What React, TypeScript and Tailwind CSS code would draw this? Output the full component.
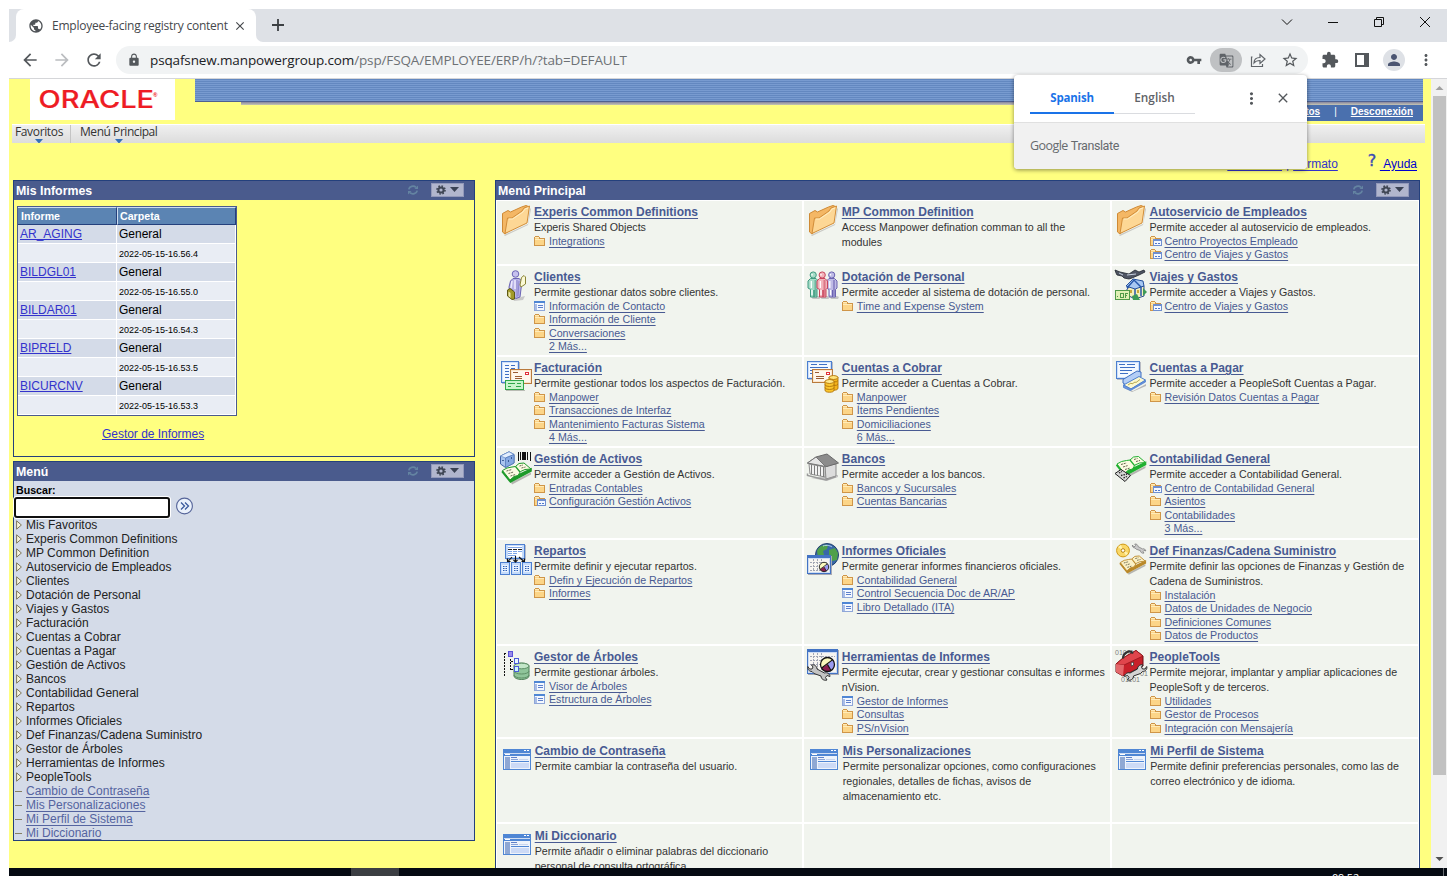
import React from "react";
import {
  MdArrowBack,
  MdArrowForward,
  MdClose,
  MdExtension,
  MdGTranslate,
  MdLock,
  MdMoreVert,
  MdPerson,
  MdPublic,
  MdRefresh,
  MdStarBorder,
  MdVpnKey,
} from "react-icons/md";

type IconKind = "folder" | "page" | "center";
type LinkItem = [IconKind | null, string];
type Entry = {
  icon: React.ReactNode;
  title: string;
  desc: string[];
  links: LinkItem[];
  low?: boolean;
};

/* ---------- large 32x32 icons ---------- */

const Svg32 = ({ children }: { children: React.ReactNode }) => (
  <svg width="32" height="32" viewBox="0 0 32 32" className="block overflow-visible">
    {children}
  </svg>
);

const BigFolder = () => (
  <Svg32>
    <path d="M4 31 28 20 30 4 31 5 28 21 5 32z" fill="#c9c9c4" />
    <path d="M2.5 27V9.5L8 6.5 10.500 8 21.500 3 26 1.500 28.500 2.500V8L5 30 2.500 28z" fill="#f4b765" stroke="#cf8a35" />
    <path d="M5 29.500 7.500 14 12 14 22 7 24 4 29.500 2 27 19 5 29.500z" fill="#fdd795" stroke="#d28d38" />
    <path d="M9 15 12.500 15 23 8 25 5 28 4" fill="none" stroke="#ffeec4" />
  </Svg32>
);

const ClientIcon = () => (
  <Svg32>
    <path d="M13 30 25 27 23 31 14 32z" fill="#c8c8c8" />
    <path d="M10.500 12 13 9.500H19L22 12 21 20 20 28 16 29.500 12 27 13 21 9.500 22 9 18z" fill="#b9b4e6" stroke="#6b64b4" />
    <path d="M17 11V28M19 12 18 27" stroke="#8d87cf" fill="none" />
    <path d="M12 12 11 19M15 11 15 20" stroke="#edeafd" fill="none" strokeWidth="1.500" />
    <circle cx="15.500" cy="5" r="3.300" fill="#c6c1ee" stroke="#6b64b4" />
    <path d="M21.500 8.500 24 6.500 25.500 8V15L21 18 20 16z" fill="#fbf9d5" stroke="#8a8438" />
    <path d="M7.500 21 10 19.500 14.500 23V30L12 30.500 7.500 27z" fill="#a29a28" stroke="#5f5a14" />
    <path d="M8.500 22.500 10.500 24V29L8.500 27z" fill="#eeeaae" />
  </Svg32>
);

const Person = ({ x, c, l }: { x: number; c: string; l: string }) => (
  <g transform={`translate(${x} 0)`}>
    <path d="M4 28 11 27 13 28 12 30H5z" fill="#c4c4c4" />
    <path d="M.5 12 3 9.500H8.500L11 12V19L9.500 20.500V28H6.500V21V28H3V20.500L.5 19z" fill={l} stroke={c} />
    <path d="M8 11V27" stroke={c} strokeOpacity=".55" strokeWidth="2" />
    <circle cx="5.700" cy="6" r="3.100" fill={l} stroke={c} />
    <path d="M4.500 5V6.500M3.800 12V19M4.500 21V26" stroke="#fff" strokeWidth="1.300" />
  </g>
);

const PeopleIcon = () => (
  <Svg32>
    <Person x={0.5} c="#3f9a80" l="#a6dcc8" />
    <Person x={19} c="#6b63b0" l="#bfbbe6" />
    <Person x={9.500} c="#c8455c" l="#f3b3bb" />
  </Svg32>
);

const Sheet = ({ x, y, w, h }: { x: number; y: number; w: number; h: number }) => (
  <g transform={`translate(${x} ${y})`} shapeRendering="crispEdges">
    <rect x="1" y="1" width={w} height={h} fill="#b9bcc4" />
    <rect x="0" y="0" width={w} height={h} fill="#4c7fd0" />
    <rect x="1" y="1" width={w - 2} height={h - 2} fill="#cfe1fb" />
    <rect x="2" y="2" width={w - 4} height={h - 4} fill="#f4f9ff" />
  </g>
);

const InvoiceIcon = () => (
  <Svg32>
    <Sheet x={1} y={1} w={18} h={22} />
    <path d="M5 5.500H9M11 5.500H15M5 8.500H9M11 8.500H15M5 11.500H9M5 14.500H9M5 17.500H9" stroke="#3e6fc4" />
    <g shapeRendering="crispEdges">
      <rect x="10" y="9" width="22" height="15" fill="#b97a3c" />
      <rect x="11" y="10" width="20" height="13" fill="#fbe6cc" />
      <rect x="12" y="11" width="18" height="11" fill="#fef6ec" />
      <rect x="25" y="12" width="4" height="3" fill="#e0303a" />
      <rect x="26" y="13" width="2" height="1" fill="#fff" />
      <rect x="5" y="20" width="19" height="10" fill="#2fa84a" />
      <rect x="6" y="21" width="17" height="8" fill="#c9f5cd" />
      <rect x="6" y="30" width="19" height="1" fill="#b9bcb4" />
    </g>
    <path d="M13 12.500H18M15 16.500H22M15 18.500H22" stroke="#9c5b33" />
    <path d="M8 23.500H15M17 23.500H21M8 26.500H11M16 26.500H21" stroke="#2fa84a" />
  </Svg32>
);

const Coins = ({ x, y }: { x: number; y: number }) => (
  <g transform={`translate(${x} ${y})`} stroke="#b27408" strokeWidth=".9">
    <path d="M4 2V13A4 2 0 0 0 13 13V2z" fill="#f4b41c" />
    <path d="M0 6V15A4 2 0 0 0 9 15V6z" fill="#fbc62c" />
    <ellipse cx="8.500" cy="2.500" rx="4.300" ry="2" fill="#ffe37a" />
    <ellipse cx="4.500" cy="6.500" rx="4.300" ry="2" fill="#ffe88a" />
    <path d="M0 9.500A4.500 2 0 0 0 9 9.500M0 12.500A4.500 2 0 0 0 9 12.500M9 7A4 2 0 0 0 13 5.500M9 10.500A4 2 0 0 0 13 9" fill="none" />
  </g>
);

const ReceivableIcon = () => (
  <Svg32>
    <Sheet x={0} y={1} w={25} h={18} />
    <path d="M4 4.500H10M12 4.500H20M3 7.500H21M3 10.500H12M3 13.500H5" stroke="#3e6fc4" />
    <g shapeRendering="crispEdges">
      <rect x="5" y="9" width="21" height="14" fill="#b97a3c" />
      <rect x="6" y="10" width="19" height="12" fill="#fbe6cc" />
      <rect x="7" y="11" width="17" height="10" fill="#fef6ec" />
      <rect x="19" y="12" width="4" height="3" fill="#e0303a" />
      <rect x="20" y="13" width="2" height="1" fill="#fff" />
    </g>
    <path d="M8 12.500H12M9 16.500H17M9 18.500H17" stroke="#9c5b33" />
    <Coins x={18} y={15} />
  </Svg32>
);

const PayableIcon = () => (
  <Svg32>
    <Sheet x={1} y={1} w={24} h={18} />
    <path d="M4 4.500H10M12 4.500H20M5 7.500H20M5 10.500H17M5 13.500H13" stroke="#3e6fc4" />
    <path d="M9 28 18 31 31 24 31 26 17 32z" fill="#b7b7b7" />
    <path d="M8 19.500 22 11 26 12 26 17 11 25 8 23z" fill="#b4cef6" stroke="#3f6fc0" />
    <path d="M8.500 25 24 16.500 30.500 20 16 29z" fill="#fbf8cf" stroke="#4c7fd0" />
    <path d="M8.500 25V27.500L15.500 30.500 30.500 22V20.500L16 29z" fill="#6f97da" stroke="#4c7fd0" strokeWidth=".8" />
    <path d="M13 25 16 23 17 24 20 22 21 22.500 25 19.500" fill="none" stroke="#b6a94e" />
  </Svg32>
);

const Book = ({ edge, page, x = 0, y = 0 }: { edge: string; page: string; x?: number; y?: number }) => (
  <g transform={`translate(${x} ${y})`}>
    <path d="M10 20 30 10 30 12 11 22z" fill="#b5b5b0" />
    <path d="M1 9 9.500 19.500 30 8.500V6.500L10 16z" fill={edge} stroke={edge} strokeWidth="1.600" />
    <path d="M1.500 8 6 5.500 11 4.500 14.500 4 18 1 23 .5 30 6.500 24 7 19.500 9 17 13 13 14 9 17.500z" fill={page} stroke={edge} />
    <path d="M14.500 4 19 9.500" stroke={edge} strokeWidth="1.200" />
    <path d="M5.500 8.500 11 7M7.500 11 12.500 9.500M9.500 13.500 14.500 12M18.500 3.500 22 2.500M20.500 5.500 24.500 4.500" stroke="#56563f" strokeWidth=".9" strokeDasharray="2 .8" fill="none" />
  </g>
);

const AssetIcon = () => (
  <Svg32>
    <path d="M.5 5 9 .8 14 3.500V12L5.500 16.500.5 13z" fill="#a9c4ee" stroke="#3f64a8" />
    <path d="M.5 5 9 .8 14 3.500 5.500 7z" fill="#e3eefd" stroke="#6f93cc" strokeWidth=".8" />
    <path d="M5.500 7V16.500L14 12V3.500z" fill="#86a9e2" stroke="#5478b8" strokeWidth=".8" />
    <path d="M8 10h1M11 7h1M3 9v1" stroke="#23427e" strokeWidth="1.500" />
    <path d="M18.500 1V10M20.500 1V9M23 1V9M25 1V9M27.500 1V9M30.500 1V10" stroke="#111" strokeWidth="1.200" shapeRendering="crispEdges" />
    <Book edge="#1e9a2a" page="#fbfbe2" x={1} y={11.500} />
  </Svg32>
);

const BankIcon = () => (
  <Svg32>
    <path d="M4 27 20 30 31 26 31 24z" fill="#c4c4c4" />
    <path d="M18 15 29 13V25L19 28z" fill="#dcdcdc" stroke="#8b8b8b" />
    <path d="M2 13 18 16V26L3 23z" fill="#f2f2f2" stroke="#8f8f8f" />
    <path d="M4.500 14V23M7.500 14.500V24M10.500 15V24M13.500 15.500V25M16.500 16V26" stroke="#7c7c7c" />
    <path d="M.5 12 9 6 20 3 31.500 12 20 15.500z" fill="#8c8c8c" stroke="#6a6a6a" />
    <path d="M.5 12 9 6 18.500 15.500z" fill="#e5e5e5" stroke="#777" />
    <path d="M.5 22.500V24.500L19 29 29 25.500" fill="none" stroke="#9a9a9a" strokeWidth="1.500" />
  </Svg32>
);

const LedgerIcon = () => (
  <Svg32>
    <Book edge="#1fb030" page="#fbfbe2" x={0.5} y={5} />
    <path d="M0 22.500 6 18.500 15.500 24.500 10 30.500z" fill="#d6d6d6" stroke="#222" />
    <path d="M4 22 7 20.500M6 24.500 12 23M8.500 27 12 25.500" stroke="#222" strokeDasharray="1.500 1" strokeWidth="1.300" />
  </Svg32>
);

const AllocIcon = () => (
  <Svg32>
    <g shapeRendering="crispEdges">
      <rect x="6" y="2" width="20" height="15" fill="#b9bcc4" />
      <rect x="5" y="1" width="20" height="15" fill="#4c7fd0" />
      <rect x="6" y="2" width="18" height="13" fill="#c4dbfa" />
      <rect x="8" y="3" width="14" height="11" fill="#fff" />
      {[0, 11, 22].map((x) => (
        <g key={x}>
          <rect x={x} y="19" width="10" height="13" fill="#4c7fd0" />
          <rect x={x + 1} y="20" width="8" height="11" fill="#c4dbfa" />
          <rect x={x + 2} y="22" width="6" height="7" fill="#e8f2ff" />
        </g>
      ))}
    </g>
    <path d="M8 6.500H12M13 6.500H17M18 6.500H22" stroke="#222" />
    <path d="M8 4.500H22M8 8.500H12M13 8.500H17M18 8.500H22M8 10.500H12M13 10.500H17M8 12.500H16" stroke="#7fa6e6" />
    <path d="M3 23.500h1.500m1 0H7M3 25.500h1.500m1 0H7M3 27.500h1.500m1 0H7M14 23.500h1.500m1 0H18M14 25.500h1.500m1 0H18M14 27.500h1.500m1 0H18M25 23.500h1.500m1 0H29M25 25.500h1.500m1 0H29M25 27.500h1.500m1 0H29" stroke="#2d5fb4" />
    <path d="M12 14 8 18.500M15.500 13V19M19 14 24 18.500M7.500 15.500V18.500H10.500M13.500 17 15.500 19 17.500 17M21.500 18.500H24.500V15.500" stroke="#111" fill="none" strokeWidth="1.100" />
  </Svg32>
);

const ReportWindow = ({ w, h }: { w: number; h: number }) => (
  <g shapeRendering="crispEdges">
    <rect x="1" y="1" width={w} height={h} fill="#a9a9b2" />
    <rect x="0" y="0" width={w} height={h} fill="#4373c4" />
    <rect x="1" y="3" width={w - 2} height={h - 4} fill="#cddcf4" />
    <rect x="2" y="4" width={w - 4} height={h - 6} fill="#f7f5f1" />
    <path d={`M3 7.500H${w - 3}M3 11.500H${w - 4}M3 15.500H${w - 8}M6.500 4V${h - 3}M10.500 4V${h - 3}M14.500 4V${h - 3}`} stroke="#a2a6b4" strokeDasharray="2 1" />
  </g>
);

const Pie = ({ cx, cy, r }: { cx: number; cy: number; r: number }) => (
  <g transform={`translate(${cx} ${cy}) scale(${r})`}>
    <circle r="1" fill="#fbf9bd" />
    <path d="M0 0 .75 -.7A1 1 0 0 1 .5 .87z" fill="#9a9af0" />
    <path d="M0 0 .5 .87A1 1 0 0 1 -.85 .5z" fill="#8c2050" />
    <path d="M-.85 .5 .75 -.7M0 0 .5 .87" stroke="#111" strokeWidth=".16" />
    <circle r="1" fill="none" stroke="#111" strokeWidth=".18" />
  </g>
);

const Wrench = ({ c = "#c4c4c4", s = "#333" }: { c?: string; s?: string }) => (
  <path
    d="M.8 17.500C0 20 2 22.500 5 22.500L7 24.500 14 27C14 30 17 32 20 31L18.500 28.500 20 26.500 23 27.500C23 25 20 23 17.500 24L10 20C10 17 7 15 4.500 16L6 18 5 20 2.500 20z"
    fill={c}
    stroke={s}
  />
);

const OfficialIcon = () => (
  <Svg32>
    <circle cx="20" cy="12" r="11.500" fill="#3868a8" stroke="#23406e" />
    <path d="M10 8C12 3 17 1 21 2L20 6 16 8 17 12 11 14zM22 7 28 5 31 10 30 17 25 18 22 13z" fill="#4fa04a" />
    <path d="M16 3C20 1.500 24 3 25 4" stroke="#bcd7f4" fill="none" />
    <g transform="translate(0 12)">
      <ReportWindow w={24} h={19} />
    </g>
    <Pie cx={17} cy={24} r={4.700} />
  </Svg32>
);

const ReportToolsIcon = () => (
  <Svg32>
    <ReportWindow w={31} h={25} />
    <Pie cx={20.500} cy={15.500} r={7} />
    <Wrench />
  </Svg32>
);

const TreeIcon = () => (
  <Svg32>
    <path d="M14 17A7.500 3 0 0 1 29 17V27A7.500 3.500 0 0 1 14 27z" fill="#8fc49a" stroke="#4f7f58" />
    <ellipse cx="21.500" cy="17" rx="7.500" ry="2.800" fill="#c3e6c8" stroke="#5f9068" />
    <path d="M14 22A7.500 3 0 0 0 29 22M14 26A7.500 3 0 0 0 29 26" stroke="#5f9068" fill="none" />
    <g shapeRendering="crispEdges">
      <path d="M4.500 27V4M4 4.500H7M10.500 10V22M11 12.500H14M11 20.500H14" stroke="#111" strokeDasharray="2 1" />
      <rect x="8" y="2" width="5" height="6" fill="#5a52d8" />
      <rect x="9" y="3" width="3" height="4" fill="#9a8ce8" />
      <rect x="14" y="9" width="5" height="6" fill="#4a5ad8" />
      <rect x="15" y="10" width="3" height="4" fill="#e6f8fd" />
      <rect x="14" y="17" width="5" height="6" fill="#4a5ad8" />
      <rect x="15" y="18" width="3" height="4" fill="#cdf6fb" />
    </g>
  </Svg32>
);

const TravelIcon = () => (
  <Svg32>
    <path d="M12 20 19 14 29 17V27L20 30 12 26z" fill="#f6efba" stroke="#2b4c92" />
    <path d="M11 17 18 10 28 12 29 17 20 20z" fill="#a8c8f2" stroke="#24509c" />
    <path d="M20 20V30M12 19 19 11 26 18V27" stroke="#2758ac" fill="none" strokeWidth="1.500" />
    <path d="M22 21h2v3h-2zM15 21h2v3h-2z" fill="#c9a83c" />
    <path d="M28 19 32 23 28 27zM17 27 22 25 25 31 18 31z" fill="#3f9a56" />
    <path d="M0 1 5 3 14 5 20 1 24 3 29 1 30 3 24 6 17 9 14 10 9 9 7 7 2 6 1 4z" fill="#4f5563" stroke="#20242e" strokeWidth=".8" />
    <path d="M12 6 21 5M4 4 8 6" stroke="#c8d0de" strokeWidth="1" />
    <g shapeRendering="crispEdges">
      <rect x="0" y="21" width="15" height="10" fill="#4f9a48" />
      <rect x="1" y="22" width="13" height="8" fill="#dff0b4" />
      <path d="M2 27.500H3M5.500 25V28.500H8.500V24.500H5M10.500 29V24.500H13M10 26.500H12" stroke="#4f9a48" fill="none" />
    </g>
  </Svg32>
);

const FinanceIcon = () => (
  <Svg32>
    <circle cx="8" cy="7.500" r="6.400" fill="#fad868" stroke="#d09a18" />
    <path d="M8 7.500 3 4 6 2zM8 7.500 13 10 11 12.500z" fill="#fff3b4" />
    <circle cx="8" cy="7.500" r="1.800" fill="#fff" stroke="#b98412" />
    <g transform="translate(17 -8.500) scale(.6)">
      <Wrench s="#666" c="#c9c9c9" />
    </g>
    <g transform="translate(4 12.500) scale(.88)">
      <Book edge="#b98828" page="#fbf0c4" />
    </g>
  </Svg32>
);

const ToolboxIcon = () => (
  <Svg32>
    <g fill="#7c7c7c" fontSize="7" className="font-['Liberation_Sans']">
      <text x="0" y="5.500">01011</text>
      <text x="6" y="32.500">01101</text>
      <text x="25" y="27">01</text>
    </g>
    <path d="M1 15 8 9 21 1.500 28 7V17L8 27 1 23z" fill="#c8202a" stroke="#6d0c12" />
    <path d="M1 15 8 9 21 1.500 28 7 9 16z" fill="#e0454c" stroke="#8b1218" strokeWidth=".7" />
    <path d="M1 15 9 16 8 27 1 23z" fill="#e4686c" />
    <path d="M8 9.500C8 4 15 0 18 4.500" fill="none" stroke="#333" strokeWidth="2.200" />
    <path d="M16 14 18.500 13 18.500 16 16.500 17z" fill="#eee" stroke="#333" strokeWidth=".7" />
    <g transform="translate(32.500 0) scale(-1 1)">
      <Wrench c="#d4d4d4" s="#2a2a2a" />
    </g>
  </Svg32>
);

const WindowIcon = () => (
  <Svg32>
    <g shapeRendering="crispEdges">
      <rect x="3" y="6" width="28" height="21" fill="#4f86d4" />
      <rect x="24" y="7" width="2" height="1" fill="#fff" />
      <rect x="27" y="7" width="2" height="1" fill="#fff" />
      <rect x="4" y="10" width="26" height="1" fill="#cfdcf2" />
      <rect x="4" y="13" width="26" height="13" fill="#eef3fb" />
      <rect x="5" y="14" width="5" height="12" fill="#8fa8d4" />
      <rect x="5" y="11" width="5" height="1" fill="#fff" />
      <rect x="11" y="14" width="6" height="1" fill="#5f80c8" />
      <rect x="11" y="16" width="7" height="1" fill="#8aa4d8" />
      <rect x="19" y="16" width="9" height="1" fill="#c9d6ee" />
      <rect x="11" y="18" width="18" height="1" fill="#4f86d4" />
      <rect x="11" y="20" width="18" height="5" fill="#ccdaf6" />
    </g>
  </Svg32>
);

/* ---------- small icons ---------- */

const SmallIcon = ({ kind }: { kind: IconKind }) => (
  <svg width="13" height="11" viewBox="0 0 13 11" className="block overflow-visible" shapeRendering="crispEdges">
    {kind === "page" ? (
      <g>
        <rect x="0" y="0" width="11" height="10" fill="#8fa6d8" />
        <rect x="0" y="0" width="11" height="2" fill="#4f86d4" />
        <rect x="1" y="2" width="9" height="7" fill="#f4f8ff" />
        <rect x="1" y="3" width="2" height="6" fill="#a9bde6" />
        <rect x="4" y="4" width="5" height="1" fill="#5d80cc" />
        <rect x="4" y="6" width="5" height="1" fill="#5d80cc" />
      </g>
    ) : (
      <g>
        <path d="M0 10V1H1V0H5V1H6V2H11V10z" fill="#cf9548" />
        <path d="M1 9V1H5V3H10V9z" fill="#fcd588" />
        <path d="M1 2V1H5V2zM1 4V3H10V4z" fill="#ffebb8" />
        {kind === "center" && (
          <g>
            <rect x="3" y="3" width="9" height="7" fill="#6f8fd0" />
            <rect x="4" y="5" width="7" height="4" fill="#f4f8ff" />
            <rect x="5" y="7" width="2" height="1" fill="#4f78cc" />
            <rect x="8" y="7" width="2" height="1" fill="#4f78cc" />
          </g>
        )}
      </g>
    )}
  </svg>
);

const PanelTools = () => (
  <div className="flex items-center">
    <svg width="12" height="12" viewBox="0 0 12 12" className="mr-[12px]" fill="none" stroke="#6484a2" strokeWidth="1.800">
      <path d="M1.800 5.300A4.200 3.800 0 0 1 9 3.300M10.200 6.700A4.200 3.800 0 0 1 3 8.700" />
      <path d="M11 1.500V5H7.500zM1 10.500V7H4.500z" fill="#6484a2" stroke="none" />
    </svg>
    <div className="flex h-[14px] w-[33px] items-center justify-center gap-[4px] border border-[#9299ba] bg-[#b1b6cd]">
      <svg width="10" height="10" viewBox="0 0 10 10">
        <circle cx="5" cy="5" r="2.600" fill="none" stroke="#3f4654" strokeWidth="2" />
        <circle cx="5" cy="5" r="4" fill="none" stroke="#3f4654" strokeWidth="1.600" strokeDasharray="1.570 1.570" />
      </svg>
      <svg width="9" height="5" viewBox="0 0 9 5">
        <path d="M0 0H9L4.500 5z" fill="#3a4254" />
      </svg>
    </div>
  </div>
);

const PanelHeader = ({ title }: { title: string }) => (
  <div className="flex h-[19px] shrink-0 items-center justify-between bg-[#4a5b8d] pr-[10px] pb-[2px] pl-[2px]">
    <span className="pt-[3px] text-[12.35px] leading-[16px] font-bold text-white">{title}</span>
    <PanelTools />
  </div>
);

/* ---------- content ---------- */

const reports: [string, string][] = [
  ["AR_AGING", "2022-05-15-16.56.4"],
  ["BILDGL01", "2022-05-15-16.55.0"],
  ["BILDAR01", "2022-05-15-16.54.3"],
  ["BIPRELD", "2022-05-15-16.53.5"],
  ["BICURCNV", "2022-05-15-16.53.3"],
];

const menu = [
  "Mis Favoritos",
  "Experis Common Definitions",
  "MP Common Definition",
  "Autoservicio de Empleados",
  "Clientes",
  "Dotación de Personal",
  "Viajes y Gastos",
  "Facturación",
  "Cuentas a Cobrar",
  "Cuentas a Pagar",
  "Gestión de Activos",
  "Bancos",
  "Contabilidad General",
  "Repartos",
  "Informes Oficiales",
  "Def Finanzas/Cadena Suministro",
  "Gestor de Árboles",
  "Herramientas de Informes",
  "PeopleTools",
];
const menuLinks = ["Cambio de Contraseña", "Mis Personalizaciones", "Mi Perfil de Sistema", "Mi Diccionario"];

const entries: (Entry | null)[] = [
  { icon: <BigFolder />, title: "Experis Common Definitions", desc: ["Experis Shared Objects"], links: [["folder", "Integrations"]] },
  { icon: <BigFolder />, title: "MP Common Definition", desc: ["Access Manpower defination comman to all the", "modules"], links: [] },
  { icon: <BigFolder />, title: "Autoservicio de Empleados", desc: ["Permite acceder al autoservicio de empleados."], links: [["center", "Centro Proyectos Empleado"], ["center", "Centro de Viajes y Gastos"]] },
  { icon: <ClientIcon />, title: "Clientes", desc: ["Permite gestionar datos sobre clientes."], links: [["page", "Información de Contacto"], ["folder", "Información de Cliente"], ["folder", "Conversaciones"], [null, "2 Más..."]] },
  { icon: <PeopleIcon />, title: "Dotación de Personal", desc: ["Permite acceder al sistema de dotación de personal."], links: [["folder", "Time and Expense System"]] },
  { icon: <TravelIcon />, title: "Viajes y Gastos", desc: ["Permite acceder a Viajes y Gastos."], links: [["center", "Centro de Viajes y Gastos"]] },
  { icon: <InvoiceIcon />, title: "Facturación", desc: ["Permite gestionar todos los aspectos de Facturación."], links: [["folder", "Manpower"], ["folder", "Transacciones de Interfaz"], ["folder", "Mantenimiento Facturas Sistema"], [null, "4 Más..."]] },
  { icon: <ReceivableIcon />, title: "Cuentas a Cobrar", desc: ["Permite acceder a Cuentas a Cobrar."], links: [["folder", "Manpower"], ["folder", "Ítems Pendientes"], ["folder", "Domiciliaciones"], [null, "6 Más..."]] },
  { icon: <PayableIcon />, title: "Cuentas a Pagar", desc: ["Permite acceder a PeopleSoft Cuentas a Pagar."], links: [["folder", "Revisión Datos Cuentas a Pagar"]] },
  { icon: <AssetIcon />, title: "Gestión de Activos", desc: ["Permite acceder a Gestión de Activos."], links: [["folder", "Entradas Contables"], ["center", "Configuración Gestión Activos"]] },
  { icon: <BankIcon />, title: "Bancos", desc: ["Permite acceder a los bancos."], links: [["folder", "Bancos y Sucursales"], ["folder", "Cuentas Bancarias"]] },
  { icon: <LedgerIcon />, title: "Contabilidad General", desc: ["Permite acceder a Contabilidad General."], links: [["center", "Centro de Contabilidad General"], ["folder", "Asientos"], ["folder", "Contabilidades"], [null, "3 Más..."]] },
  { icon: <AllocIcon />, title: "Repartos", desc: ["Permite definir y ejecutar repartos."], links: [["folder", "Defin y Ejecución de Repartos"], ["folder", "Informes"]] },
  { icon: <OfficialIcon />, title: "Informes Oficiales", desc: ["Permite generar informes financieros oficiales."], links: [["folder", "Contabilidad General"], ["page", "Control Secuencia Doc de AR/AP"], ["page", "Libro Detallado (ITA)"]] },
  { icon: <FinanceIcon />, title: "Def Finanzas/Cadena Suministro", desc: ["Permite definir las opciones de Finanzas y Gestión de", "Cadena de Suministros."], links: [["folder", "Instalación"], ["folder", "Datos de Unidades de Negocio"], ["folder", "Definiciones Comunes"], ["folder", "Datos de Productos"]] },
  { icon: <TreeIcon />, title: "Gestor de Árboles", desc: ["Permite gestionar árboles."], links: [["page", "Visor de Árboles"], ["page", "Estructura de Árboles"]] },
  { icon: <ReportToolsIcon />, title: "Herramientas de Informes", desc: ["Permite ejecutar, crear y gestionar consultas e informes", "nVision."], links: [["page", "Gestor de Informes"], ["folder", "Consultas"], ["folder", "PS/nVision"]] },
  { icon: <ToolboxIcon />, title: "PeopleTools", desc: ["Permite mejorar, implantar y ampliar aplicaciones de", "PeopleSoft y de terceros."], links: [["folder", "Utilidades"], ["folder", "Gestor de Procesos"], ["folder", "Integración con Mensajería"]] },
  { icon: <WindowIcon />, title: "Cambio de Contraseña", desc: ["Permite cambiar la contraseña del usuario."], links: [], low: true },
  { icon: <WindowIcon />, title: "Mis Personalizaciones", desc: ["Permite personalizar opciones, como configuraciones", "regionales, detalles de fichas, avisos de", "almacenamiento etc."], links: [], low: true },
  { icon: <WindowIcon />, title: "Mi Perfil de Sistema", desc: ["Permite definir preferencias personales, como las de", "correo electrónico y de idioma."], links: [], low: true },
  { icon: <WindowIcon />, title: "Mi Diccionario", desc: ["Permite añadir o eliminar palabras del diccionario", "personal de consulta ortográfica."], links: [], low: true },
  null,
  null,
];

const iconWidths = ["w-[34px]", "w-[34.8px]", "w-[34.5px]"];
const lowIconWidths = ["w-[34.7px]", "w-[35.8px]", "w-[35.2px]"];

const Cell = ({ e, col }: { e: Entry | null; col: number }) => (
  <div className="flex min-w-0 overflow-visible bg-[#f1f4ee] pl-[3px]">
    {e && (
      <>
        <div className={`shrink-0 ${e.low ? "pt-[4px]" : "pt-[3px]"} ${e.low ? lowIconWidths[col] : iconWidths[col]}`}>{e.icon}</div>
        <div className={e.low ? "min-w-0 pt-[4px]" : "min-w-0 pt-[3px]"}>
          <div className="h-[16px] text-[12px] leading-[16px] font-bold whitespace-nowrap text-[#485a92] underline underline-offset-[1.500px]">
            {e.title}
          </div>
          {e.desc.map((d) => (
            <div key={d} className="h-[15px] text-[10.66px] leading-[15px] whitespace-nowrap text-[#333]">
              {d}
            </div>
          ))}
          {e.links.map(([k, t]) => (
            <div key={t} className="flex h-[13.300px] items-center">
              <div className="w-[15px] shrink-0">{k && <SmallIcon kind={k} />}</div>
              <span className="text-[10.66px] leading-[13px] whitespace-nowrap text-[#485a92] underline underline-offset-[1.500px]">
                {t}
              </span>
            </div>
          ))}
        </div>
      </>
    )}
  </div>
);

/* ---------- browser chrome ---------- */

const TabStrip = () => (
  <div className="flex h-[33px] bg-[#dee1e6] font-['Open_Sans','Noto_Sans',sans-serif]">
    <div className="w-[7px] bg-white">
      <div className="h-full rounded-br-[7px] bg-[#dee1e6]" />
    </div>
    <div className="bg-[#dee1e6]">
      <div className="flex h-[33px] w-[240px] items-center rounded-t-[8px] bg-white pl-[12px] text-[#45484c]">
        <MdPublic className="h-[16px] w-[16px] text-[#505458]" />
        <span className="ml-[8px] w-[181px] text-[12px] tracking-[-0.24px] whitespace-nowrap">Employee-facing registry content</span>
        <MdClose className="h-[14px] w-[14px]" />
      </div>
    </div>
    <div className="flex flex-1 bg-white">
      <div className="flex flex-1 items-center justify-between rounded-bl-[7px] bg-[#dee1e6] pl-[15px]">
        <svg width="14" height="14" viewBox="0 0 14 14" stroke="#3c4043" strokeWidth="1.800" className="mb-[2px]">
          <path d="M7 1V13M1 7H13" />
        </svg>
        <svg width="156" height="14" viewBox="1280 15 156 14" className="mr-[11px] mb-[7px]" fill="none" stroke="#111">
          <path d="M1282 19.500 1287 24.500 1292 19.500" />
          <path d="M1328 22.500H1338" />
          <path d="M1374.500 19.500H1381.500V26.500H1374.500zM1376.500 19V17.500H1383.500V24.500H1382" />
          <path d="M1420 17 1430 27M1430 17 1420 27" />
        </svg>
      </div>
    </div>
  </div>
);

const Toolbar = () => (
  <div className="flex h-[37px] items-center border-b border-[#d5d6d9] bg-white pl-[11px] font-['Open_Sans','Noto_Sans',sans-serif]">
    <MdArrowBack className="h-[20px] w-[20px] text-[#54585c]" />
    <MdArrowForward className="ml-[12px] h-[20px] w-[20px] text-[#bbbdc0]" />
    <MdRefresh className="ml-[12px] h-[20px] w-[20px] text-[#54585c]" />
    <div className="ml-[12px] flex h-[28px] w-[1192px] items-center rounded-full bg-[#f1f3f4] pr-[9px] pl-[11px]">
      <MdLock className="h-[14px] w-[14px] text-[#54585c]" />
      <span className="ml-[9px] flex-1 text-[13.500px] tracking-[-0.130px] whitespace-nowrap text-[#6d7175]">
        <span className="text-[#202124]">psqafsnew.manpowergroup.com</span>/psp/FSQA/EMPLOYEE/ERP/h/?tab=DEFAULT
      </span>
      <MdVpnKey className="mr-[8px] h-[16px] w-[16px] text-[#54585c]" />
      <div className="flex h-[24px] w-[32px] items-center justify-center rounded-full bg-[#bfc1c3]">
        <MdGTranslate className="h-[15px] w-[15px] text-[#5f6368]" />
      </div>
      <svg width="16" height="16" viewBox="0 0 16 16" fill="none" stroke="#5f6368" strokeWidth="1.200" className="ml-[8px]">
        <path d="M2.500 5H1.500V14.500H12.500V12" />
        <path d="M4 11C4 7 7 5.500 10 5.500V2.500L15 7 10 11.500V8.500C7 8.500 5.500 9 4 11z" />
      </svg>
      <MdStarBorder className="ml-[15px] h-[18px] w-[18px] text-[#54585c]" />
    </div>
    <MdExtension className="ml-[13px] h-[18px] w-[18px] text-[#54585c]" />
    <svg width="14" height="14" viewBox="0 0 14 14" className="ml-[16px]">
      <path d="M1 1H13V13H1z" fill="none" stroke="#54585c" strokeWidth="2" />
      <path d="M9 1H13V13H9z" fill="#54585c" />
    </svg>
    <div className="ml-[14px] flex h-[22px] w-[22px] items-center justify-center rounded-full bg-[#dee1e6]">
      <MdPerson className="h-[18px] w-[18px] text-[#4b5572]" />
    </div>
    <MdMoreVert className="ml-[12px] h-[18px] w-[18px] text-[#54585c]" />
  </div>
);

const TranslatePopup = () => (
  <div className="absolute top-[75px] left-[1014px] z-10 h-[94px] w-[293px] overflow-hidden rounded-[4px] bg-white font-['Open_Sans','Noto_Sans',sans-serif] shadow-[0_1px_4px_rgba(0,0,0,0.45)]">
    <div className="flex h-[48px] border-b border-[#e0e0e0] pl-[16px]">
      <div className="flex h-[39px] w-[84px] items-center justify-center border-b-2 border-[#1a73e8] pt-[8px] text-[11.500px] font-bold text-[#1a73e8]">
        <span className="tracking-[-0.2px]">Spanish</span>
      </div>
      <div className="flex h-[39px] w-[81px] items-center justify-center border-b border-[#dadce0] pt-[7px] text-[11.800px] font-semibold text-[#5f6368]">
        English
      </div>
      <MdMoreVert className="mt-[14px] ml-[47px] h-[19px] w-[19px] text-[#54585c]" />
      <MdClose className="mt-[15px] ml-[14px] h-[16px] w-[16px] text-[#54585c]" />
    </div>
    <div className="flex h-[46px] items-center bg-[#f1f1f1] pl-[16px] text-[#666a6e]">
      <span className="text-[12.500px] tracking-[-0.55px]">Google</span>
      <span className="ml-[3px] font-['Roboto'] text-[12.500px] tracking-[-0.4px]">Translate</span>
    </div>
  </div>
);

/* ---------- page ---------- */

const Banner = () => (
  <div className="flex h-[45px] shrink-0">
    <div className="ml-[21px] h-[41px] w-[145px] bg-white">
      <svg width="145" height="41" viewBox="0 0 145 41" fill="#ee1c24">
        <text x="8.500" y="28.500" fontSize="24" textLength="115.500" lengthAdjust="spacingAndGlyphs" stroke="#ee1c24" strokeWidth=".2" className="font-['Inter','Liberation_Sans'] font-medium">
          ORACLE
        </text>
        <text x="123" y="17.500" fontSize="6" className="font-['Liberation_Sans'] font-bold">
          ®
        </text>
      </svg>
    </div>
    <div className="ml-[20px] flex w-[1228px] flex-col">
      <div className="h-[23px] border-b border-[#4f6191] bg-[repeating-linear-gradient(180deg,#6388c0_0px,#6388c0_1px,#789bd0_1px,#789bd0_2px)]" />
      <div className="ml-[46px] h-[3px] bg-[linear-gradient(180deg,#8787a0,#c6c6b4)]" />
      <div className="ml-auto flex h-[16px] w-[360px] items-center justify-end bg-[#4a70ae] pr-[10px] pb-[3px] text-[10px] font-bold text-white">
        <span className="underline">Añadir a Favoritos</span>
        <span className="mx-[14px] font-normal">|</span>
        <span className="underline">Desconexión</span>
      </div>
    </div>
  </div>
);

const DownMark = () => (
  <svg width="8" height="4" viewBox="0 0 8 4" className="block">
    <path d="M0 0H8L4.500 4h-1z" fill="#3470b8" />
  </svg>
);

const MenuBar = () => (
  <div className="mr-[6px] ml-[3px] flex h-[19px] shrink-0 border-t border-white bg-[linear-gradient(180deg,#f0f0f0,#dcdcdc)] font-['Open_Sans','Noto_Sans',sans-serif] text-[12px] leading-[14px] text-[#333]">
    <div className="flex w-[59px] flex-col items-center border-r border-[#c4c4c4] pr-[4px]">
      <span className="tracking-[-0.35px]">Favoritos</span>
      <DownMark />
    </div>
    <div className="ml-[9px] flex flex-col items-center">
      <span className="tracking-[-0.45px]">Menú Principal</span>
      <DownMark />
    </div>
  </div>
);

const ReportsPanel = () => (
  <div className="h-[277px] border border-[#24407c]">
    <PanelHeader title="Mis Informes" />
    <div className="mt-[6px] ml-[3px] h-[210px] w-[220px] border border-[#4a5b8d] bg-white">
      <div className="flex h-[18px] text-[10.65px] leading-[17px] font-bold text-white">
        <div className="w-[99px] border-t border-r border-b border-t-[#cddcf0] border-r-[#24407c] border-b-[#24407c] bg-[#5b84b3] pl-[3px]">Informe</div>
        <div className="flex-1 border border-[#cddcf0] border-r-[#24407c] border-b-[#24407c] bg-[#5b84b3] pl-[2px]">Carpeta</div>
      </div>
      {reports.map(([name, date]) => (
        <div key={name}>
          <div className="flex h-[19px] text-[12px] leading-[18px]">
            <div className="mr-px mb-px w-[98px] bg-[#d4dbe8] pl-[2px] text-[#3333cc]">
              <span className="underline">{name}</span>
            </div>
            <div className="mr-px mb-px flex-1 bg-[#d4dbe8] pl-[2px] text-black">General</div>
          </div>
          <div className="flex h-[19px] text-[9px] leading-[20px]">
            <div className="mr-px mb-px w-[98px] bg-[#e9edf4]" />
            <div className="mr-px mb-px flex-1 bg-[#e9edf4] pl-[2px] text-black">{date}</div>
          </div>
        </div>
      ))}
    </div>
    <div className="mt-[10px] pl-[88px] text-[12px] leading-[16px] tracking-[-0.03px] text-[#3333cc]">
      <span className="underline">Gestor de Informes</span>
    </div>
  </div>
);

const MenuPanel = () => (
  <div className="mt-[4px] h-[380px] border border-[#24407c] bg-[#d4dbe8]">
    <PanelHeader title="Menú" />
    <div className="h-[16px] pl-[2px] text-[10.65px] leading-[18px] font-bold text-black">Buscar:</div>
    <div className="flex h-[21px] items-start">
      <div className="h-[21px] w-[156px] rounded-[3px] border-2 border-[#101010] bg-white shadow-[0_0_0_1px_#fff]" />
      <svg width="18" height="18" viewBox="0 0 18 18" className="ml-[6px]">
        <circle cx="8.500" cy="9" r="7.900" fill="#eaf1fb" stroke="#56659a" strokeWidth="1.100" />
        <path d="M5 5.500 8.500 9 5 12.500M9 5.500 12.500 9 9 12.500" fill="none" stroke="#3a5a9c" strokeWidth="1.300" />
      </svg>
    </div>
    {menu.map((m) => (
      <div key={m} className="flex h-[14px] items-center pl-[2px] text-[12px] leading-[14px] text-[#222]">
        <svg width="6" height="10" viewBox="0 0 6 10" className="mr-[4px]">
          <path d="M.6 .8V9.200L5.400 5z" fill="#f6f3dc" stroke="#7d775a" strokeWidth="1" />
        </svg>
        {m}
      </div>
    ))}
    {menuLinks.map((m) => (
      <div key={m} className="flex h-[14px] items-center pl-px text-[12px] leading-[14px] text-[#5564a0]">
        <div className="mr-[4px] h-px w-[7px] bg-[#857f62]" />
        <span className="underline underline-offset-[1.500px]">{m}</span>
      </div>
    ))}
  </div>
);

const Scrollbar = () => (
  <div className="flex w-[16px] flex-col items-center bg-[#f1f1f1]">
    <svg width="16" height="17" viewBox="0 0 16 17">
      <path d="M4.500 11H12.500L8.500 7z" fill="#a0a0a0" />
    </svg>
    <div className="ml-px h-[679px] w-[13px] bg-[#c1c1c1]" />
    <svg width="16" height="17" viewBox="0 0 16 17" className="mt-auto">
      <path d="M4.500 6H12.500L8.500 10z" fill="#505050" />
    </svg>
  </div>
);

export default function App() {
  return (
    <div className="relative h-[876px] w-[1456px] overflow-hidden bg-white px-[9px] pt-[9px] font-['Liberation_Sans',Arial,sans-serif]">
      <TabStrip />
      <Toolbar />
      <div className="flex h-[789px] overflow-hidden">
        <div className="flex w-[1422px] flex-col bg-[#ffff80]">
          <Banner />
          <MenuBar />
          <div className="flex h-[37px] shrink-0 items-center justify-end pt-[4px] pr-[14px] text-[12px] text-[#3333cc]">
            <span className="underline underline-offset-[2px]">Contenido</span>
            <span className="mx-[4px]">|</span>
            <span className="underline underline-offset-[2px]">Formato</span>
            <span className="ml-[30px] w-[11px] pb-[5px] font-['DejaVu_Sans'] text-[16px] leading-[18px] text-[#3a4cb4] [-webkit-text-stroke:0.4px_#3a4cb4]">?</span>
            <span className="ml-[1px] text-[#0000d0] underline underline-offset-[2px]">&nbsp;Ayuda</span>
          </div>
          <div className="flex">
            <div className="ml-[4px] w-[462px] shrink-0">
              <ReportsPanel />
              <MenuPanel />
            </div>
            <div className="ml-[20px] h-[700px] w-[925px] shrink-0 overflow-hidden border border-[#24407c] bg-white">
              <PanelHeader title="Menú Principal" />
              <div className="mx-px mt-px grid grid-cols-[305px_306px_306px] grid-rows-[63px_89px_89px_90px_104px_91px_83px_90px] gap-[2px]">
                {entries.map((e, i) => (
                  <Cell key={i} e={e} col={i % 3} />
                ))}
              </div>
            </div>
          </div>
        </div>
        <Scrollbar />
      </div>
      <div className="flex h-[8px] overflow-hidden bg-[#050a12]">
        <div className="ml-[342px] h-full w-[48px] bg-[#3b3e42]" />
        <div className="ml-[933px] h-[8px] overflow-hidden pt-[3px] font-['Open_Sans'] text-[11px] leading-[14px] tracking-[-0.2px] text-white">09:52</div>
        <div className="mr-[3px] ml-auto w-px bg-[#6a6d72]" />
      </div>
      <TranslatePopup />
    </div>
  );
}
